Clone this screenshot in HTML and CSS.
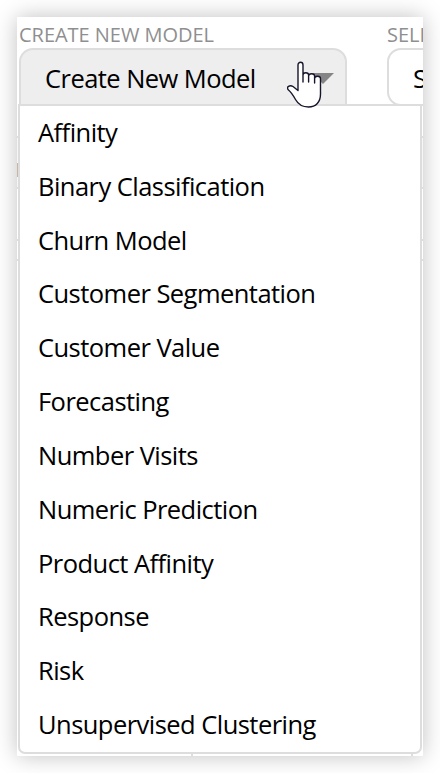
FILE: index.html
```
<!DOCTYPE html>
<html lang="en">
<head>
  <meta charset="UTF-8">
  <meta name="viewport" content="width=device-width, initial-scale=1.0">
  <title>Create New Model</title>
  <link rel="stylesheet" href="styles.css">
</head>
<body>
  <div class="panel">
    <div class="fields">
      <div class="field">
        <label class="field-label">CREATE NEW MODEL</label>
        <div class="select select-open">
          <span class="select-text">Create New Model</span>
          <svg class="arrow" width="22" height="12" viewBox="0 0 22 12">
            <path d="M0 0H22L11 11Z" fill="#858585"/>
          </svg>
        </div>
      </div>
      <div class="field">
        <label class="field-label">SELE</label>
        <div class="select">
          <span class="select-text">S</span>
        </div>
      </div>
    </div>

    <!-- Table behind the open menu -->
    <div class="table">
      <div class="table-row filter-row">
        <div class="filter-mark"></div>
      </div>
      <div class="table-row gap-row"></div>
      <div class="table-row head-row"></div>
      <div class="table-body">
        <div class="cell cell-first"></div>
        <div class="cell cell-second"></div>
      </div>
    </div>

    <ul class="menu">
      <li>Affinity</li>
      <li>Binary Classification</li>
      <li>Churn Model</li>
      <li>Customer Segmentation</li>
      <li>Customer Value</li>
      <li>Forecasting</li>
      <li>Number Visits</li>
      <li>Numeric Prediction</li>
      <li>Product Affinity</li>
      <li>Response</li>
      <li>Risk</li>
      <li>Unsupervised Clustering</li>
    </ul>

    <!-- Hand pointer -->
    <svg class="pointer" width="36" height="48" viewBox="0 0 36 48">
      <path d="M11 29.500V4C11 0.400 16 0.400 16 4V21V14C16 11 21.600 11 21.600 14V21V15C21.600 12 27.600 12 27.600 15V22V17.500C27.600 14.500 33.500 14.500 33.500 17.500V33C33.500 41 29 46 21.500 46C14.500 46 11 43 8.500 38.500C6 34 4.500 31.500 1.500 29C-1.500 26 3 23.500 6 25.500Z" fill="#fff" stroke="#15152b" stroke-width="1.400" stroke-linejoin="round"/>
    </svg>
  </div>
</body>
</html>
```
FILE: styles.css
```
* {
  box-sizing: border-box;
}

body {
  margin: 0;
  padding: 17px;
  height: 773px;
  background: #fff;
  font-family: "Open Sans", sans-serif;
  color: #000;
  overflow: hidden;
}

.panel {
  position: relative;
  display: flex;
  flex-direction: column;
  width: 406px;
  height: 739px;
  background: #fff;
  box-shadow: 0 0 21px rgba(0, 0, 0, 0.25);
}

/* Select fields */
.fields {
  display: flex;
  gap: 40px;
  padding: 5px 0 0 2px;
  height: 89px;
  overflow: hidden;
}

.field {
  flex: none;
  width: 328px;
}

.field-label {
  display: block;
  height: 26px;
  line-height: 26px;
  font-size: 20px;
  letter-spacing: -0.03px;
  color: #8f8f8f;
  white-space: nowrap;
}

.select {
  display: flex;
  align-items: center;
  justify-content: space-between;
  height: 58px;
  padding: 0 11px 0 24px;
  border: 2px solid #ddd;
  border-radius: 14px;
  font-size: 25.5px;
}

.select-open {
  background: #eee;
  border-radius: 14px 14px 0 0;
}

.select-text {
  padding-top: 1px;
  letter-spacing: -0.55px;
}

.arrow {
  margin-top: 3px;
}

/* Table */
.table {
  flex: 1;
  display: flex;
  flex-direction: column;
  padding-top: 30px;
}

.table-row {
  border-top: 2px solid #ddd;
}

.filter-row {
  height: 51px;
  padding-top: 25px;
  background: #f6f6f6;
}

.filter-mark {
  width: 1px;
  height: 14px;
  background: #c9b5a8;
}

.gap-row {
  height: 52px;
}

.head-row {
  height: 20px;
}

.table-body {
  flex: 1;
  display: flex;
  border-top: 2px solid #ddd;
}

.cell {
  border-right: 2px solid #ddd;
}

.cell-first {
  width: 176px;
}

.cell-second {
  width: 220px;
}

/* Dropdown menu, lies over the table */
.menu {
  position: absolute;
  top: 87px;
  left: 1px;
  display: flex;
  flex-direction: column;
  width: 404px;
  height: 650px;
  margin: 0;
  padding: 0;
  list-style: none;
  background: #fff;
  border: 2px solid #ddd;
  border-radius: 0 0 7px 7px;
}

.menu li {
  flex: 1;
  display: flex;
  align-items: center;
  padding: 0 0 2px 18px;
  font-size: 25.5px;
  letter-spacing: -0.54px;
}

.pointer {
  position: absolute;
  top: 44px;
  left: 270px;
}
```
